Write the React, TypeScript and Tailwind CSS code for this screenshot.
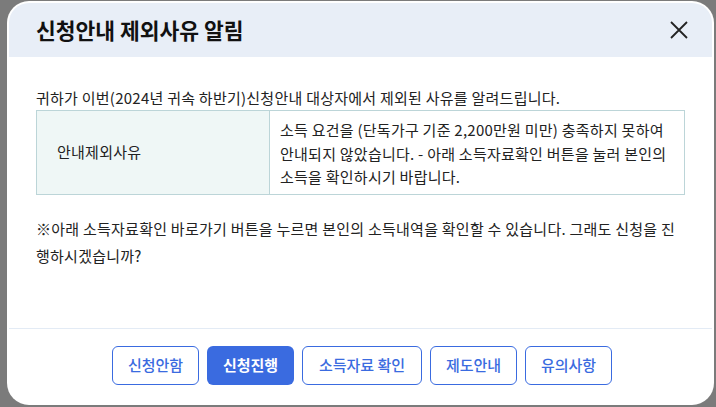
import React from "react";

export default function App() {
  const font = { fontFamily: '"Noto Sans CJK KR", "Noto Sans", sans-serif' };
  return (
    <div
      className="w-[716px] h-[407px] bg-[#7b7b7b] pt-[1px] pl-[7px] pr-[2px] pb-[2px] overflow-hidden"
      style={font}
    >
      <div className="w-full h-full border-2 border-dotted border-white rounded-[22px] overflow-hidden bg-white flex flex-col">
        <div className="h-[54px] shrink-0 bg-[#e8eef7] flex items-center justify-between pl-[27px] pr-[20px]">
          <h1 className="text-[21.5px] font-bold text-[#111]">신청안내 제외사유 알림</h1>
          <svg width="20" height="20" viewBox="0 0 20 20" className="mr-[3px]">
            <path d="M2 2 L18 18 M18 2 L2 18" stroke="#222" strokeWidth="1.8" />
          </svg>
        </div>
        <div className="flex-1 pl-[27px] pr-[27px] pt-[30px] text-[15px] text-[#222] tracking-[0.25px]">
          <p className="leading-[22px]">
            귀하가 이번(2024년 귀속 하반기)신청안내 대상자에서 제외된 사유를 알려드립니다.
          </p>
          <div className="mt-[1px] border border-[#bcd5d8] flex">
            <div className="w-[233px] shrink-0 bg-[#eff7f6] border-r border-[#bcd5d8] flex items-center pl-[20px]">
              안내제외사유
            </div>
            <div className="flex-1 pl-[10px] pr-[12px] pt-[7px] pb-[5px] leading-[23.5px]">
              소득 요건을 (단독가구 기준 2,200만원 미만) 충족하지 못하여 안내되지 않았습니다. - 아래 소득자료확인 버튼을 눌러 본인의 소득을 확인하시기 바랍니다.
            </div>
          </div>
          <p className="mt-[20px] leading-[27px]">
            ※아래 소득자료확인 바로가기 버튼을 누르면 본인의 소득내역을 확인할 수 있습니다. 그래도 신청을 진행하시겠습니까?
          </p>
        </div>
        <div className="shrink-0 border-t border-[#e3ebf5] flex justify-center gap-[8px] pl-[3px] pt-[17px] pb-[18px] text-[15px] font-medium">
          <button className="w-[87px] h-[39px] rounded-[6px] border border-[#3a6be0] text-[#3a6be0]">신청안함</button>
          <button className="w-[87px] h-[39px] rounded-[6px] bg-[#3a6be0] text-white font-semibold">신청진행</button>
          <button className="w-[120px] h-[39px] rounded-[6px] border border-[#3a6be0] text-[#3a6be0]">소득자료 확인</button>
          <button className="w-[87px] h-[39px] rounded-[6px] border border-[#3a6be0] text-[#3a6be0]">제도안내</button>
          <button className="w-[87px] h-[39px] rounded-[6px] border border-[#3a6be0] text-[#3a6be0]">유의사항</button>
        </div>
      </div>
    </div>
  );
}
